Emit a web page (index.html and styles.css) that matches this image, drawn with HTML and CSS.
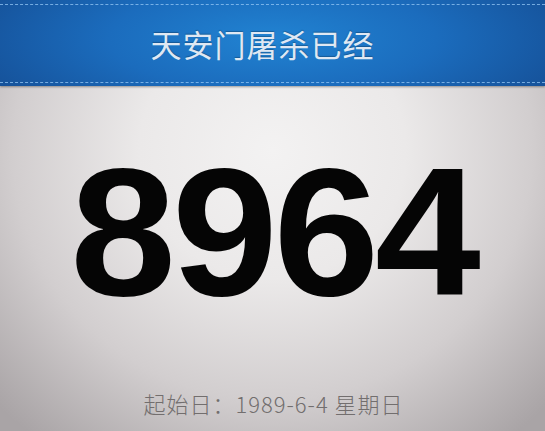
FILE: index.html
```html
<!DOCTYPE html>
<html lang="zh">
<head>
<meta charset="utf-8">
<link rel="stylesheet" href="styles.css">
</head>
<body>
<div class="page">
  <header class="bar">
    <div class="stitch"></div>
    <h1 class="title">天安门屠杀已经</h1>
    <div class="stitch"></div>
  </header>
  <main class="body">
    <div class="count">8964</div>
    <div class="since">起始日：1989-6-4 星期日</div>
  </main>
</div>
</body>
</html>
```
FILE: styles.css
```css
html, body {
  margin: 0;
  padding: 0;
  width: 545px;
  height: 431px;
  overflow: hidden;
}
.page {
  width: 545px;
  height: 431px;
  display: flex;
  flex-direction: column;
  background: radial-gradient(ellipse 70% 85% at 50% 35%, #f3f2f2 0%, #ebe9e9 35%, #d2cecf 68%, #a9a4a6 100%);
}
.bar {
  height: 86px;
  display: flex;
  flex-direction: column;
  justify-content: space-between;
  padding: 4px 0 3px;
  box-sizing: border-box;
  background: radial-gradient(ellipse 60% 120% at 50% 45%, #2183d2 0%, #1b6cbd 50%, #154f96 100%);
  box-shadow: 0 1px 2px rgba(0,0,0,0.35);
}
.stitch {
  height: 0;
  border-top: 1px dashed rgba(150, 200, 245, 0.75);
}
.title {
  margin: 0;
  padding-right: 20px;
  text-align: center;
  font-family: "Noto Sans CJK SC", sans-serif;
  font-weight: 400;
  font-size: 31px;
  line-height: 40px;
  color: #dfe8f3;
  letter-spacing: 1px;
  text-shadow: 0 -1px 1px rgba(0,0,0,0.25);
}
.body {
  flex: 1;
  display: flex;
  flex-direction: column;
  align-items: center;
}
.count {
  margin-top: 46px;
  font-family: "Liberation Sans", Arial, sans-serif;
  font-weight: 700;
  font-size: 182px;
  line-height: 200px;
  color: #050505;
  letter-spacing: -4px;
  transform: scaleX(1.045);
  padding-left: 2px;
}
.since {
  margin-top: 55px;
  padding-left: 2px;
  font-family: "Noto Sans CJK SC", sans-serif;
  font-weight: 300;
  font-size: 22px;
  color: #726e6e;
  letter-spacing: 1px;
}
```
